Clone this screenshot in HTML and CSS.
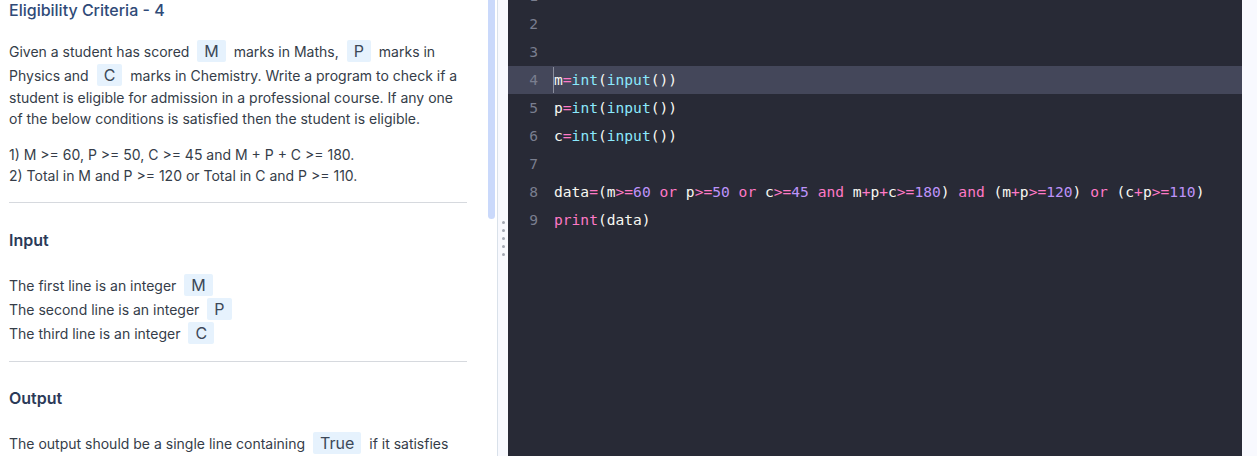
FILE: index.html
```html
<!DOCTYPE html>
<html>
<head>
<meta charset="utf-8">
<link rel="stylesheet" href="styles.css">
</head>
<body>
<div class="app">
  <div class="left">
    <div class="desc">
      <h1 class="title">Eligibility Criteria - 4</h1>
      <p class="para">Given a student has scored <span class="chip">M</span> marks in Maths, <span class="chip">P</span> marks in Physics and <span class="chip">C</span> marks in Chemistry. Write a program to check if a student is eligible for admission in a professional course. If any one of the below conditions is satisfied then the student is eligible.</p>
      <p class="list">1) M &gt;= 60, P &gt;= 50, C &gt;= 45 and M + P + C &gt;= 180.<br>2) Total in M and P &gt;= 120 or Total in C and P &gt;= 110.</p>
      <hr class="rule rule-a">
      <h2 class="heading heading-a">Input</h2>
      <p class="lines first">The first line is an integer <span class="chip">M</span><br>The second line is an integer <span class="chip">P</span><br>The third line is an integer <span class="chip">C</span></p>
      <hr class="rule rule-b">
      <h2 class="heading heading-b">Output</h2>
      <p class="lines last">The output should be a single line containing <span class="chip">True</span> if it satisfies</p>
    </div>
    <div class="track"><div class="thumb"></div></div>
  </div>
  <div class="splitter"><span class="dot"></span><span class="dot"></span><span class="dot"></span><span class="dot"></span><span class="dot"></span></div>
  <div class="editor">
    <div class="rows">
      <div class="row"><span class="ln">1</span><span class="code"></span></div>
      <div class="row"><span class="ln">2</span><span class="code"></span></div>
      <div class="row"><span class="ln">3</span><span class="code"></span></div>
      <div class="row active"><span class="ln">4</span><span class="code"><span class="caret"></span>m<span class="op">=</span><span class="bi">int</span>(<span class="bi">input</span>())</span></div>
      <div class="row"><span class="ln">5</span><span class="code">p<span class="op">=</span><span class="bi">int</span>(<span class="bi">input</span>())</span></div>
      <div class="row"><span class="ln">6</span><span class="code">c<span class="op">=</span><span class="bi">int</span>(<span class="bi">input</span>())</span></div>
      <div class="row"><span class="ln">7</span><span class="code"></span></div>
      <div class="row"><span class="ln">8</span><span class="code">data<span class="op">=</span>(m<span class="op">&gt;=</span><span class="num">60</span> <span class="kw">or</span> p<span class="op">&gt;=</span><span class="num">50</span> <span class="kw">or</span> c<span class="op">&gt;=</span><span class="num">45</span> <span class="kw">and</span> m<span class="op">+</span>p<span class="op">+</span>c<span class="op">&gt;=</span><span class="num">180</span>) <span class="kw">and</span> (m<span class="op">+</span>p<span class="op">&gt;=</span><span class="num">120</span>) <span class="kw">or</span> (c<span class="op">+</span>p<span class="op">&gt;=</span><span class="num">110</span>)</span></div>
      <div class="row"><span class="ln">9</span><span class="code"><span class="kw">print</span>(data)</span></div>
    </div>
  </div>
  <div class="edge"></div>
</div>
</body>
</html>
```

FILE: styles.css
```css
* { box-sizing: border-box; }
html, body { margin: 0; padding: 0; height: 100%; overflow: hidden; background: #ffffff; }
.app { display: flex; width: 1257px; height: 456px; overflow: hidden; }

.left { display: flex; width: 497px; flex: none; background: #ffffff; overflow: hidden; }
.desc { width: 488px; padding: 0 0 0 9px; font-family: Inter, "Noto Sans", sans-serif; font-size: 14px; color: #353d49; }
.track { width: 9px; flex: none; }
.thumb { width: 7px; height: 219px; background: #cad9fb; border-radius: 0 0 4px 4px; }

.title { margin: 0; font-size: 16px; font-weight: 500; line-height: 20px; color: #2f4a78; }
.para { margin: 19px 0 0; width: 455px; line-height: 21px; }
.para .chip { margin-top: 1px; margin-bottom: 1px; }
.list { margin: 15px 0 0; line-height: 21px; }
.rule { width: 458px; border: 0; border-top: 1px solid #d6d9de; height: 0; }
.rule-a { margin: 16px 0 0; }
.rule-b { margin: 15px 0 0; }
.heading { font-size: 16px; font-weight: 600; line-height: 22px; color: #2b3a58; }
.heading-a { margin: 26px 0 0; }
.heading-b { margin: 25px 0 0; }
.lines { line-height: 24px; }
.lines.first { margin: 23px 0 0; }
.lines.last { margin: 23px 0 0; }

.chip { display: inline-block; font-size: 16px; line-height: 22px; padding: 0 7px; margin: 0 4px; background: #e6f2fd; color: #3c4858; border-radius: 2px; vertical-align: baseline; }

.splitter { width: 11px; flex: none; background: #f8f9fe; border-left: 1px solid #d9e1ea; display: flex; flex-direction: column; align-items: center; padding-top: 221px; gap: 5px; }
.dot { width: 3px; height: 3px; border-radius: 50%; background: #a3a8b3; }

.editor { width: 734px; flex: none; background: #282a36; overflow: hidden; font-family: "DejaVu Sans Mono", monospace; font-size: 14.6px; }
.rows { margin-top: -18px; }
.row { display: flex; height: 28px; line-height: 28px; }
.row.active { background: #44475a; }
.ln { width: 30px; text-align: right; color: #7a7e8f; flex: none; }
.code { padding-left: 16px; color: #f8f8f2; white-space: pre; position: relative; }
.caret { position: absolute; left: 15px; top: 1px; width: 1px; height: 26px; background: #8a8d9c; }
.op { color: #ff79c6; }
.kw { color: #ff79c6; }
.bi { color: #8be9fd; }
.num { color: #bd93f9; }

.edge { flex: 1; background: #f8f9fe; }
```
